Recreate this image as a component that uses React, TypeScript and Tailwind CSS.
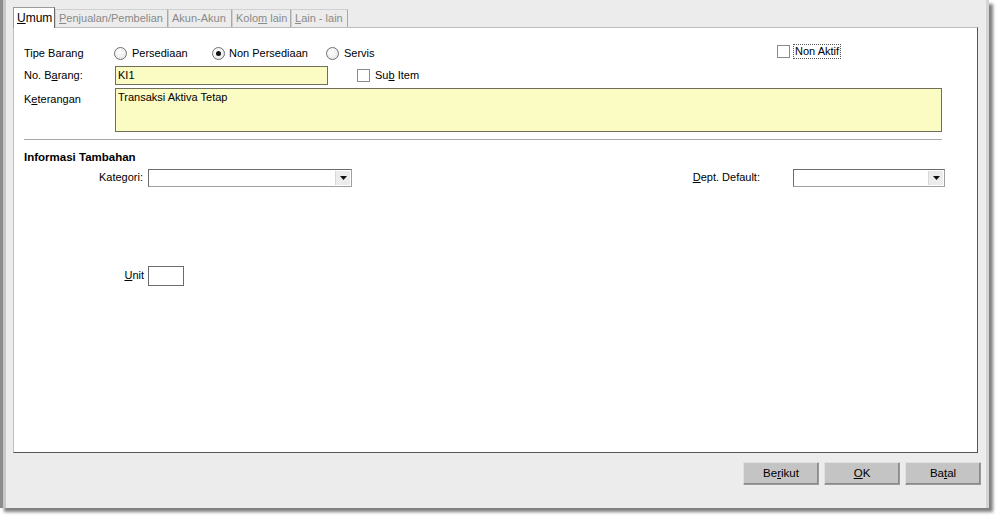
import type { ReactNode } from "react";

function U({ children }: { children: ReactNode }) {
  return <span className="underline underline-offset-[1px]">{children}</span>;
}

function Radio({ checked }: { checked?: boolean }) {
  return (
    <span className="w-[13px] h-[13px] rounded-full border border-[#6f6f6f] bg-[radial-gradient(circle_at_40%_35%,#ffffff,#e2e2e2)] flex items-center justify-center shrink-0">
      {checked ? <span className="w-[5px] h-[5px] rounded-full bg-[#111]" /> : null}
    </span>
  );
}

function Check() {
  return <span className="w-[13px] h-[13px] border border-[#8a8a8a] bg-white shrink-0" />;
}

function Combo({ width }: { width: string }) {
  return (
    <div className={`${width} h-[18px] border border-t-[#6b6b6b] border-l-[#6b6b6b] border-r-[#a0a0a0] border-b-[#a0a0a0] bg-white flex justify-end p-[1px]`}>
      <div className="w-[15px] h-full bg-[#ececec] border-l border-[#d8d8d8] flex items-center justify-center">
        <svg width="7" height="4" viewBox="0 0 7 4">
          <path d="M0 0h7L3.5 4z" fill="#111" />
        </svg>
      </div>
    </div>
  );
}

const tabs = [
  { label: <><U>U</U>mum</>, w: "w-[42px]", active: true },
  { label: <><U>P</U>enjualan/Pembelian</>, w: "w-[113px]" },
  { label: <>Akun-Akun</>, w: "w-[64px]" },
  { label: <>Kolo<U>m</U> lain</>, w: "w-[59px]" },
  { label: <><U>L</U>ain - lain</>, w: "w-[57px]" },
];

export default function App() {
  return (
    <div className="w-[996px] h-[516px] bg-white font-['Liberation_Sans',Arial,sans-serif] text-[11px] text-black leading-none">
      <div className="w-[989px] h-[508px] bg-[#ececec] border-l-[3px] border-[#8c8c8c] shadow-[4px_4px_3px_rgba(0,0,0,0.5)] flex flex-col">
        <div className="flex flex-1 flex-col border-l-[3px] border-[#c8c8c8] border-r-[3px] border-r-[#d4d4d4] pl-[7px]">
          <div className="flex items-end h-[27px] pt-[6px]">
            {tabs.map((t, i) => (
              <div
                key={i}
                className={
                  t.active
                    ? `${t.w} h-[21px] bg-white border-t border-l border-r border-[#9a9a9a] border-r-[#6a6a6a] flex items-center pl-[3px] text-[12px] relative top-[1px]`
                    : `${t.w} h-[18px] border-t border-l border-r border-[#d0d0d0] border-r-[#a8a8a8] flex items-center pl-[3px] text-[#8a8a8a] text-[11px] whitespace-nowrap overflow-hidden`
                }
              >
                <span>{t.label}</span>
              </div>
            ))}
          </div>
          <div className="w-[965px] h-[426px] bg-white border border-l-[#bdbdbd] border-t-[#bdbdbd] border-r-[#555] border-b-[#555] pl-[10px] pt-[17px]">
            <div className="flex items-center h-[16px]">
              <div className="w-[90px]">Tipe Barang</div>
              <div className="w-[98px] flex items-center gap-[5px]">
                <Radio />
                <span>Persediaan</span>
              </div>
              <div className="w-[114px] flex items-center gap-[4px]">
                <Radio checked />
                <span>Non Persediaan</span>
              </div>
              <div className="w-[451px] flex items-center gap-[5px]">
                <Radio />
                <span>Servis</span>
              </div>
              <div className="flex items-center gap-[4px] relative -top-[2px]">
                <Check />
                <span className="outline-1 outline-dotted outline-[#555] px-[1px] py-[1px]">Non Aktif</span>
              </div>
            </div>
            <div className="flex items-center mt-[5px] h-[19px]">
              <div className="w-[91px]">
                No. B<U>a</U>rang:
              </div>
              <div className="w-[213px] h-[19px] bg-[#fbfbc4] border border-[#6e6e5a] pl-[2px] pt-[3px]">KI1</div>
              <div className="ml-[29px] flex items-center gap-[5px]">
                <Check />
                <span>
                  Su<U>b</U> Item
                </span>
              </div>
            </div>
            <div className="flex mt-[3px]">
              <div className="w-[91px] pt-[6px]">
                K<U>e</U>terangan
              </div>
              <div className="w-[827px] h-[44px] bg-[#fbfbc4] border border-[#6e6e5a] pl-[2px] pt-[3px]">
                Transaksi Aktiva Tetap
              </div>
            </div>
            <div className="w-[918px] mt-[7px] border-t border-[#a8a8a8] border-b border-b-white" />
            <div className="mt-[11px] font-bold text-[11.5px]">Informasi Tambahan</div>
            <div className="flex items-center mt-[5px]">
              <div className="w-[124px] text-right pr-[5px]">Kategori:</div>
              <Combo width="w-[204px]" />
              <div className="w-[441px] text-right pr-[33px]">
                <U>D</U>ept. Default:
              </div>
              <Combo width="w-[152px]" />
            </div>
            <div className="flex items-center mt-[79px]">
              <div className="w-[124px] text-right pr-[4px]">
                <U>U</U>nit
              </div>
              <div className="w-[36px] h-[20px] border border-[#6b6b6b] bg-white" />
            </div>
          </div>
          <div className="flex justify-end gap-[5px] mt-[9px] pr-[5px]">
            {[
              <>Be<U>r</U>ikut</>,
              <><U>O</U>K</>,
              <>Ba<U>t</U>al</>,
            ].map((b, i) => (
              <div
                key={i}
                className="w-[76px] h-[23px] bg-[#c4c4c4] border border-[#9a9a9a] border-t-[#e0e0e0] border-l-[#e0e0e0] shadow-[inset_-1px_-1px_0_#8a8a8a] flex items-center justify-center text-[11.5px]"
              >
                <span>{b}</span>
              </div>
            ))}
          </div>
        </div>
      </div>
    </div>
  );
}
